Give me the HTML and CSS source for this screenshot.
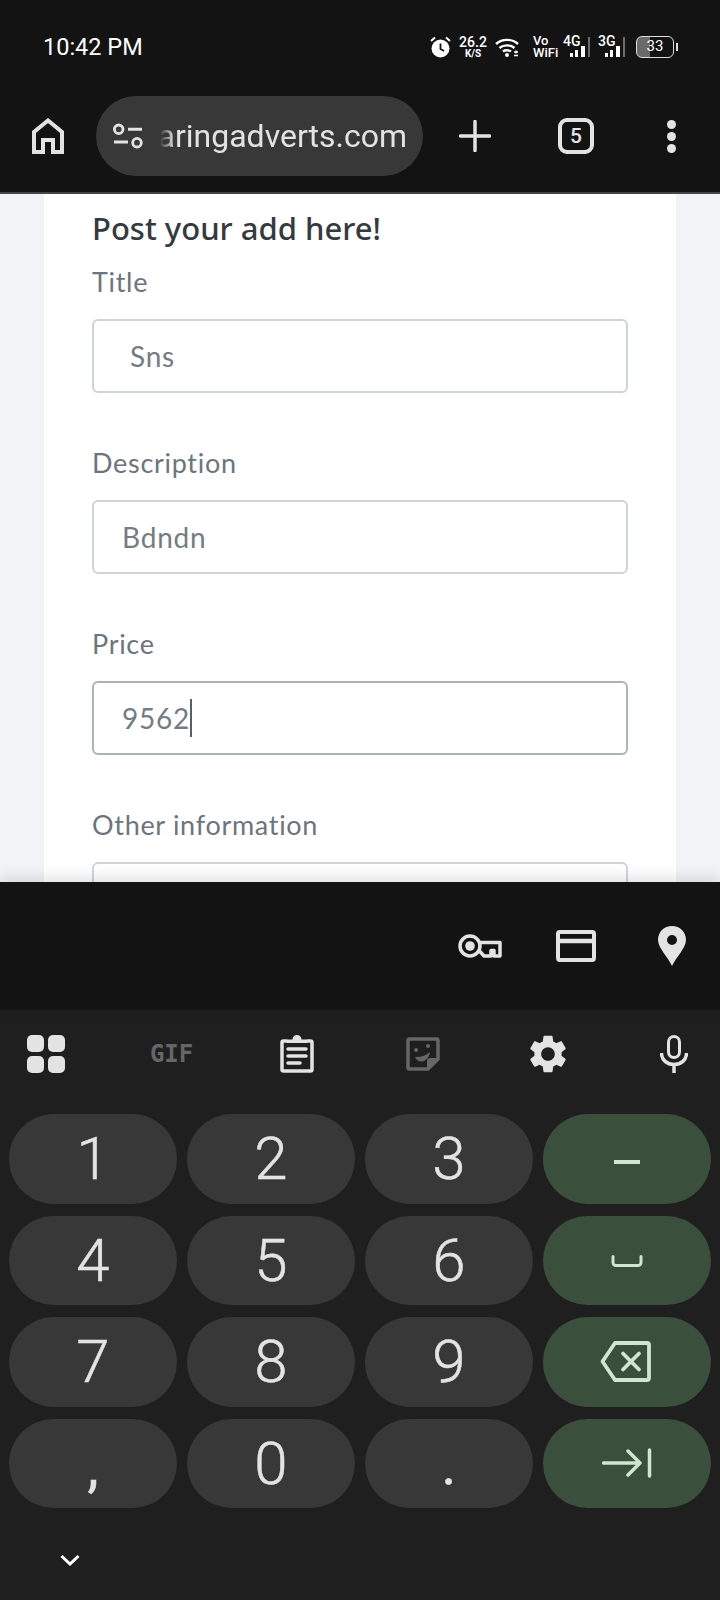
FILE: index.html
```html
<!DOCTYPE html>
<html lang="en">

<head>
    <meta charset="UTF-8">
    <meta name="viewport" content="width=device-width, initial-scale=1.0">
    <link rel="stylesheet" href="styles.css">
    <title>Post your add</title>
</head>

<body>
    <div class="top">
        <div class="status">
            <span class="time">10:42 PM</span>
            <div class="status-icons">
                <svg class="alarm" viewBox="0 0 21 22">
                    <circle cx="10.5" cy="12.5" r="9" fill="#fff" />
                    <path d="M10.5 7.5v5.5l3.5 2" fill="none" stroke="#131313" stroke-width="1.8" />
                    <path d="M1 5l4-3.5M20 5l-4-3.5" fill="none" stroke="#fff" stroke-width="2" />
                </svg>
                <div class="speed"><span>26.2</span><span class="speed-unit">K/S</span></div>
                <svg class="wifi" viewBox="0 0 24 19">
                    <path d="M1 6c6-5.500 16-5.500 22 0M4.500 10c4-3.500 11-3.500 15 0M8 13.500c2-1.600 6-1.600 8 0" fill="none" stroke="#fff" stroke-width="2.400" />
                    <circle cx="12" cy="17" r="2" fill="#fff" />
                    <path d="M19 14h4M21 12.500v3M19 17.500h4" stroke="#fff" stroke-width="1.400" />
                </svg>
                <div class="vowifi"><span>Vo</span><span>WiFi</span></div>
                <div class="sim">
                    <div class="sim-main">
                        <span>4G</span>
                        <svg class="bars" viewBox="0 0 15 11">
                            <path d="M0 7h3v4H0zM5 4h3v7H5zM11 0h4v11h-4z" fill="#fff" />
                        </svg>
                    </div>
                    <span class="sim-dim"></span>
                </div>
                <div class="sim sim-second">
                    <div class="sim-main">
                        <span>3G</span>
                        <svg class="bars" viewBox="0 0 15 11">
                            <path d="M0 7h3v4H0zM5 4h3v7H5zM11 0h4v11h-4z" fill="#fff" />
                        </svg>
                    </div>
                    <span class="sim-dim"></span>
                </div>
                <div class="battery">33</div>
                <span class="battery-nub"></span>
            </div>
        </div>

        <div class="toolbar">
            <svg class="home" viewBox="0 0 32 36">
                <path d="M2 34V14L16 2.500 30 14V34H21V22H11V34Z" fill="none" stroke="#e3e3e3" stroke-width="4" />
            </svg>
            <div class="url">
                <svg class="tune" viewBox="0 0 31 26">
                    <circle cx="5.700" cy="6.300" r="4.300" fill="none" stroke="#e3e3e3" stroke-width="2.800" />
                    <circle cx="24" cy="19.700" r="4.300" fill="none" stroke="#e3e3e3" stroke-width="2.800" />
                    <path d="M15 6.300h14M1 19h14" stroke="#e3e3e3" stroke-width="3" />
                </svg>
                <div class="url-clip"><span>aringadverts.com</span></div>
            </div>
            <svg class="plus" viewBox="0 0 32 32">
                <path d="M16 1.500v29M1.500 16h29" stroke="#e3e3e3" stroke-width="3.500" stroke-linecap="round" />
            </svg>
            <div class="tabs">5</div>
            <div class="dots"><span></span><span></span><span></span></div>
        </div>
    </div>

    <div class="page">
        <form class="card">
            <h2 class="card-title">Post your add here!</h2>
            <div class="field field-first">
                <p class="label">Title</p>
                <div class="input input-title">Sns</div>
            </div>
            <div class="field">
                <p class="label">Description</p>
                <div class="input">Bdndn</div>
            </div>
            <div class="field">
                <p class="label">Price</p>
                <div class="input input-focus">9562<span class="caret"></span></div>
            </div>
            <div class="field">
                <p class="label">Other information</p>
                <div class="input"></div>
            </div>
        </form>
    </div>

    <div class="autofill">
        <div class="fill-slot">
            <svg class="key" viewBox="0 0 44 24">
                <circle cx="12" cy="12" r="10" fill="none" stroke="#e3e3e3" stroke-width="3.500" />
                <circle cx="12" cy="12" r="4.800" fill="#e3e3e3" />
                <path d="M22 8.500H42V22H36V16.500H33V22H26L21.500 17" fill="none" stroke="#e3e3e3" stroke-width="3.500" stroke-linejoin="round" />
            </svg>
        </div>
        <div class="fill-slot">
            <svg class="credit" viewBox="0 0 40 32">
                <rect x="2" y="2" width="36" height="28" rx="2" fill="none" stroke="#e3e3e3" stroke-width="4" />
                <path d="M2 11h36" stroke="#e3e3e3" stroke-width="4.500" />
            </svg>
        </div>
        <div class="fill-slot">
            <svg class="pin" viewBox="0 0 28 40">
                <path fill-rule="evenodd" fill="#e3e3e3" d="M14 0C6 0 0 6 0 14c0 8 10 17 14 26 4-9 14-18 14-26C28 6 22 0 14 0zM14 9a5 5 0 1 1 0 10 5 5 0 0 1 0-10z" />
            </svg>
        </div>
    </div>

    <div class="keyboard">
        <div class="kb-tools">
            <div class="tool">
                <div class="apps"><span></span><span></span><span></span><span></span></div>
            </div>
            <div class="tool"><span class="gif">GIF</span></div>
            <div class="tool">
                <svg class="clip" viewBox="0 0 34 38">
                    <path d="M7 6H3.500a1.500 1.500 0 0 0-1.500 1.500V34.500A1.500 1.500 0 0 0 3.500 36H30.500A1.500 1.500 0 0 0 32 34.500V7.500A1.500 1.500 0 0 0 30.500 6H27" fill="none" stroke="#e3e3e3" stroke-width="3.500" />
                    <path d="M7 8V4.500H12.500a4.500 4.500 0 0 1 9 0H27V8Z" fill="#e3e3e3" />
                    <path d="M8 14h18M8 21h18M8 28h12" stroke="#e3e3e3" stroke-width="3.500" stroke-linecap="round" />
                </svg>
            </div>
            <div class="tool">
                <svg class="sticker" viewBox="0 0 34 34">
                    <path d="M3.500 2H30.500A1.500 1.500 0 0 1 32 3.500V22L22 32H3.500A1.500 1.500 0 0 1 2 30.500V3.500A1.500 1.500 0 0 1 3.500 2Z" fill="none" stroke="#666" stroke-width="3.500" />
                    <path d="M32 21H24a3 3 0 0 0-3 3V32Z" fill="#666" />
                    <circle cx="10" cy="13" r="2" fill="#666" />
                    <circle cx="22" cy="9" r="2" fill="#666" />
                    <path d="M9 20c5 .5 11-1 15-5-.5 5-4 9-8 9.500-3 .4-6-2-7-4.500Z" fill="#666" />
                </svg>
            </div>
            <div class="tool">
                <svg class="gear" viewBox="2.500 2 19 20">
                    <path fill="#e3e3e3" d="M19.140 12.940c.04-.3.06-.61.06-.94 0-.32-.02-.64-.07-.94l2.030-1.580c.18-.14.23-.41.12-.61l-1.920-3.320c-.12-.22-.37-.29-.59-.22l-2.390.96c-.5-.38-1.030-.7-1.620-.94l-.36-2.540c-.04-.24-.24-.41-.48-.41h-3.840c-.24 0-.43.17-.47.41l-.36 2.540c-.59.24-1.130.57-1.620.94l-2.390-.96c-.22-.08-.47 0-.59.22L2.740 8.870c-.12.21-.08.47.12.61l2.030 1.580c-.05.3-.09.63-.09.94s.02.64.07.94l-2.030 1.580c-.18.14-.23.41-.12.61l1.920 3.320c.12.22.37.29.59.22l2.390-.96c.5.38 1.030.7 1.620.94l.36 2.540c.05.24.24.41.48.41h3.840c.24 0 .44-.17.47-.41l.36-2.540c.59-.24 1.130-.56 1.620-.94l2.390.96c.22.08.47 0 .59-.22l1.920-3.320c.12-.22.07-.47-.12-.61l-2.010-1.580zM12 15.600c-1.980 0-3.600-1.620-3.600-3.600s1.620-3.600 3.600-3.600 3.600 1.620 3.600 3.600-1.620 3.600-3.600 3.600z" />
                </svg>
            </div>
            <div class="tool">
                <svg class="mic" viewBox="0 0 28 38">
                    <rect x="8.500" y="1.500" width="11" height="21" rx="5.500" fill="none" stroke="#e3e3e3" stroke-width="3" />
                    <path d="M1.500 18c0 7 5.500 11.500 12.500 11.500S26.500 25 26.500 18M14 29v9" fill="none" stroke="#e3e3e3" stroke-width="3.500" />
                </svg>
            </div>
        </div>

        <div class="keys">
            <div class="k">1</div>
            <div class="k">2</div>
            <div class="k">3</div>
            <div class="k k-green">
                <svg class="ic-minus" viewBox="0 0 26 4"><path d="M0 2h26" stroke="#cfe6d0" stroke-width="4" /></svg>
            </div>
            <div class="k">4</div>
            <div class="k">5</div>
            <div class="k">6</div>
            <div class="k k-green">
                <svg class="ic-space" viewBox="0 0 32 12"><path d="M2 1.500V7.500a3 3 0 0 0 3 3H27a3 3 0 0 0 3-3V1.500" fill="none" stroke="#cfe6d0" stroke-width="3" stroke-linecap="round" /></svg>
            </div>
            <div class="k">7</div>
            <div class="k">8</div>
            <div class="k">9</div>
            <div class="k k-green">
                <svg class="ic-back" viewBox="0 0 51 41"><path d="M15 2H47a2 2 0 0 1 2 2V37a2 2 0 0 1-2 2H15L2.500 20.500Z" fill="none" stroke="#cfe6d0" stroke-width="3.800" stroke-linejoin="round" /><path d="M23 12.500l16 16M39 12.500l-16 16" stroke="#cfe6d0" stroke-width="3.800" stroke-linecap="round" /></svg>
            </div>
            <div class="k k-comma">,</div>
            <div class="k">0</div>
            <div class="k k-dot">.</div>
            <div class="k k-green">
                <svg class="ic-tab" viewBox="0 0 50 30"><path d="M1.500 15H38M26 3l12 12-12 12" fill="none" stroke="#cfe6d0" stroke-width="3.500" stroke-linecap="round" stroke-linejoin="round" /><path d="M47.500 2V28" stroke="#cfe6d0" stroke-width="3.500" stroke-linecap="round" /></svg>
            </div>
        </div>

        <svg class="chevron" viewBox="0 0 20 12">
            <path d="M1.500 2l8.500 8 8.500-8" fill="none" stroke="#fff" stroke-width="3" />
        </svg>
    </div>
</body>

</html>
```

FILE: styles.css
```css
* {
    box-sizing: border-box;
}

body {
    margin: 0;
    width: 720px;
    height: 1600px;
    overflow: hidden;
    background-color: #131313;
    font-family: Roboto, sans-serif;
}

/* status bar + browser toolbar */
.top {
    height: 194px;
    background-color: #131313;
    border-bottom: 2px solid #454545;
}

.status {
    height: 94px;
    padding: 0 42px 0 43px;
    display: flex;
    align-items: center;
    justify-content: space-between;
    color: #fff;
}

.time {
    font-size: 23.5px;
}

.status-icons {
    display: flex;
    align-items: center;
}

.alarm {
    width: 21px;
    height: 22px;
    margin-right: 8px;
}

.speed {
    width: 28px;
    margin-right: 8px;
    display: flex;
    flex-direction: column;
    align-items: center;
    font-size: 14px;
    line-height: 13px;
    font-weight: 500;
}

.speed-unit {
    font-size: 10px;
    line-height: 10px;
    font-weight: 700;
}

.wifi {
    width: 24px;
    height: 19px;
    margin-right: 14px;
}

.vowifi {
    width: 23px;
    margin-right: 7px;
    display: flex;
    flex-direction: column;
    font-size: 13px;
    line-height: 12px;
    font-weight: 500;
}

.sim {
    height: 20px;
    display: flex;
    gap: 3px;
    margin-right: 8px;
}

.sim-second {
    margin-right: 11px;
}

.sim-main {
    width: 22px;
    display: flex;
    flex-direction: column;
    font-size: 14px;
    line-height: 9px;
    font-weight: 500;
}

.bars {
    width: 15px;
    height: 11px;
    align-self: flex-end;
}

.sim-dim {
    width: 2px;
    background-color: #6b6b6b;
}

.battery {
    width: 38px;
    height: 22px;
    border: 1.5px solid #ddd;
    border-radius: 6px;
    background: linear-gradient(to right, #6a6a6a 35%, transparent 35%);
    font-size: 15px;
    line-height: 19px;
    text-align: center;
}

.battery-nub {
    width: 2px;
    height: 8px;
    margin-left: 2px;
    background-color: #ddd;
}

.toolbar {
    height: 98px;
    padding: 0 0 14px 32px;
    display: flex;
    align-items: center;
}

.home {
    width: 32px;
    height: 36px;
    margin-right: 32px;
}

.url {
    width: 327px;
    height: 80px;
    border-radius: 40px;
    background-color: #383838;
    display: flex;
    align-items: center;
    padding-left: 17px;
    margin-right: 36px;
}

.tune {
    width: 31px;
    height: 26px;
    flex: none;
}

.url-clip {
    width: 253px;
    margin-left: 10px;
    display: flex;
    justify-content: flex-end;
    -webkit-mask-image: linear-gradient(to right, transparent 6px, #000 20px);
    mask-image: linear-gradient(to right, transparent 6px, #000 20px);
    color: #e3e3e3;
    font-size: 32px;
    white-space: nowrap;
}

.plus {
    width: 32px;
    height: 32px;
    margin-right: 67px;
}

.tabs {
    width: 36px;
    height: 36px;
    border: 4px solid #e3e3e3;
    border-radius: 9px;
    margin-right: 73px;
    color: #e3e3e3;
    font-size: 21px;
    font-weight: 500;
    line-height: 28px;
    text-align: center;
}

.dots {
    display: flex;
    flex-direction: column;
    gap: 3px;
}

.dots span {
    width: 9px;
    height: 9px;
    border-radius: 50%;
    background-color: #e3e3e3;
}

/* web page part */
.page {
    height: 688px;
    padding: 0 44px;
    overflow: hidden;
    background-color: #f1f3f7;
}

.card {
    height: 100%;
    padding: 14px 48px 0 48px;
    background-color: #fff;
    font-family: Lato, sans-serif;
}

.card-title {
    margin: 0;
    color: #343a40;
    font-family: "Noto Sans", sans-serif;
    font-size: 31px;
    line-height: 40px;
    font-weight: 500;
}

.field {
    margin-top: 52px;
}

.field-first {
    margin-top: 16px;
}

.label {
    margin: 0 0 19px;
    color: #6c757d;
    font-size: 27px;
    line-height: 36px;
    letter-spacing: 0.7px;
}

.input {
    height: 74px;
    padding-left: 28px;
    display: flex;
    align-items: center;
    border: 2px solid #ced4da;
    border-radius: 6px;
    color: #737c84;
    font-size: 28px;
    letter-spacing: 0.8px;
}

.input-title {
    padding-left: 36px;
}

.input-focus {
    border-color: #aab3bb;
}

.caret {
    width: 2px;
    height: 38px;
    background-color: #56606a;
}

/* autofill strip on top of keyboard */
.autofill {
    position: relative;
    height: 128px;
    padding-right: 24px;
    display: flex;
    align-items: center;
    justify-content: flex-end;
    gap: 48px;
    background-color: #131313;
    box-shadow: 0 -4px 14px rgba(0, 0, 0, 0.12);
}

.fill-slot {
    width: 48px;
    display: flex;
    justify-content: center;
}

.key {
    width: 44px;
    height: 24px;
}

.credit {
    width: 40px;
    height: 32px;
}

.pin {
    width: 28px;
    height: 40px;
}

.keyboard {
    height: 590px;
    background-color: #1f1f1f;
}

.kb-tools {
    height: 104px;
    padding: 24px 26px 0;
    display: flex;
    justify-content: space-between;
}

.tool {
    width: 40px;
    height: 40px;
    display: flex;
    align-items: center;
    justify-content: center;
}

.apps {
    display: grid;
    grid-template-columns: 17px 17px;
    grid-auto-rows: 17px;
    gap: 4px;
    flex: none;
}

.apps span {
    border-radius: 5px;
    background-color: #e3e3e3;
}

.gif {
    color: #666;
    font-family: "DejaVu Sans Mono", monospace;
    font-size: 24px;
    font-weight: 700;
}

.clip {
    width: 34px;
    height: 38px;
    flex: none;
}

.sticker {
    width: 34px;
    height: 34px;
    flex: none;
}

.gear {
    width: 36px;
    height: 38px;
    flex: none;
}

.mic {
    width: 28px;
    height: 38px;
    flex: none;
}

.keys {
    padding-left: 9px;
    display: grid;
    grid-template-columns: repeat(4, 168px);
    grid-template-rows: repeat(4, 89.5px);
    gap: 12px 10px;
}

.k {
    border-radius: 45px;
    background-color: #383838;
    display: flex;
    align-items: center;
    justify-content: center;
    color: #e3e3e3;
    font-size: 60px;
    font-weight: 300;
    -webkit-text-stroke: 0.5px #e3e3e3;
}

.k-green {
    background-color: #3a4f3c;
}

.k-comma {
    font-size: 56px;
    font-weight: 400;
    padding-top: 8px;
}

.k-dot {
    font-size: 56px;
    font-weight: 400;
    padding-top: 3px;
}

.ic-minus {
    width: 26px;
    height: 4px;
    margin-top: 6px;
}

.ic-space {
    width: 32px;
    height: 12px;
    margin-top: 2px;
}

.ic-back {
    width: 51px;
    height: 41px;
    margin-right: 3px;
}

.ic-tab {
    width: 50px;
    height: 30px;
}

.chevron {
    display: block;
    width: 20px;
    height: 12px;
    margin: 46px 0 0 60px;
}
```
